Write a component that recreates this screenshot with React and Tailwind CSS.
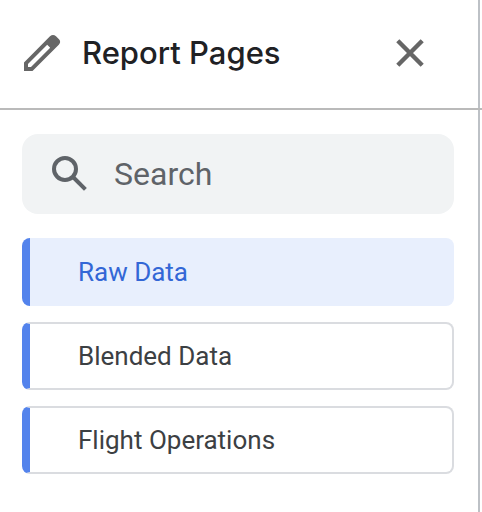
import { useState } from 'react'

const PAGES = ['Raw Data', 'Blended Data', 'Flight Operations']

function PencilIcon({ className }) {
  return (
    <svg className={className} viewBox="0 0 48 48" fill="currentColor" aria-hidden="true">
      <path
        fillRule="evenodd"
        d="M6 33.5 L32 7.3 Q35 4.6 38 7.3 L41 10.3 Q43.4 13 40.8 15.8 L14.5 42 H6 Z M10 35 V38 H13 L32.2 18.8 L29.2 15.8 Z"
      />
    </svg>
  )
}

function CloseIcon({ className }) {
  return (
    <svg className={className} viewBox="0 0 48 48" fill="none" stroke="currentColor" strokeWidth="4.4" aria-hidden="true">
      <path d="M11.8 11.8 L36.2 36.2 M36.2 11.8 L11.8 36.2" />
    </svg>
  )
}

function SearchIcon({ className }) {
  return (
    <svg className={className} viewBox="0 0 48 48" fill="none" stroke="currentColor" strokeWidth="4" aria-hidden="true">
      <circle cx="19" cy="19" r="11" />
      <path d="M26.5 26.5 L39.4 39.4" />
    </svg>
  )
}

function Header() {
  return (
    <header className="-mr-1 flex h-[110px] items-center border-b-2 border-[#bababa] pr-12 pb-0.5 pl-[18px]">
      <PencilIcon className="size-12 shrink-0 text-[#666666]" />
      <h1 className="ml-4 flex-1 font-['Inter','Roboto',sans-serif] text-[31px] leading-10 font-medium text-[#202124]">
        Report Pages
      </h1>
      <button type="button" aria-label="Close" className="shrink-0 cursor-pointer text-[#666666]">
        <CloseIcon className="size-12" />
      </button>
    </header>
  )
}

function SearchBox({ value, onChange }) {
  return (
    <label className="flex h-20 items-center rounded-2xl bg-[#f1f3f4] px-6 text-[#5f6368]">
      <SearchIcon className="size-12 shrink-0" />
      <input
        type="text"
        aria-label="Search pages"
        placeholder="Search"
        value={value}
        onChange={(e) => onChange(e.target.value)}
        className="ml-5 min-w-0 flex-1 bg-transparent text-[32px] leading-10 outline-none placeholder:text-[#5f6368]"
      />
    </label>
  )
}

function PageItem({ name, active, onSelect }) {
  const colors = active
    ? 'bg-[#e8effd] text-[#3367d6]'
    : 'border-y-2 border-r-2 border-y-[#dadce0] border-r-[#dadce0] bg-white text-[#3c4043]'

  return (
    <li>
      <button
        type="button"
        aria-current={active ? 'page' : undefined}
        onClick={onSelect}
        className={`h-[68px] w-full cursor-pointer rounded-lg border-l-8 border-l-[#5383ec] pl-12 text-left text-[26px] leading-8 ${colors}`}
      >
        {name}
      </button>
    </li>
  )
}

export default function App() {
  const [query, setQuery] = useState('')
  const [current, setCurrent] = useState('Raw Data')

  const visible = PAGES.filter((name) => name.toLowerCase().includes(query.toLowerCase()))

  return (
    <div className="min-h-screen bg-white pr-0.5 font-['Roboto',sans-serif]">
      <div className="min-h-screen border-r-2 border-[#bdc1c6]">
        <Header />
        <main className="pt-6 pr-6 pl-[22px]">
          <SearchBox value={query} onChange={setQuery} />
          <ul className="mt-6 flex flex-col gap-4">
            {visible.map((name) => (
              <PageItem key={name} name={name} active={name === current} onSelect={() => setCurrent(name)} />
            ))}
          </ul>
        </main>
      </div>
    </div>
  )
}
